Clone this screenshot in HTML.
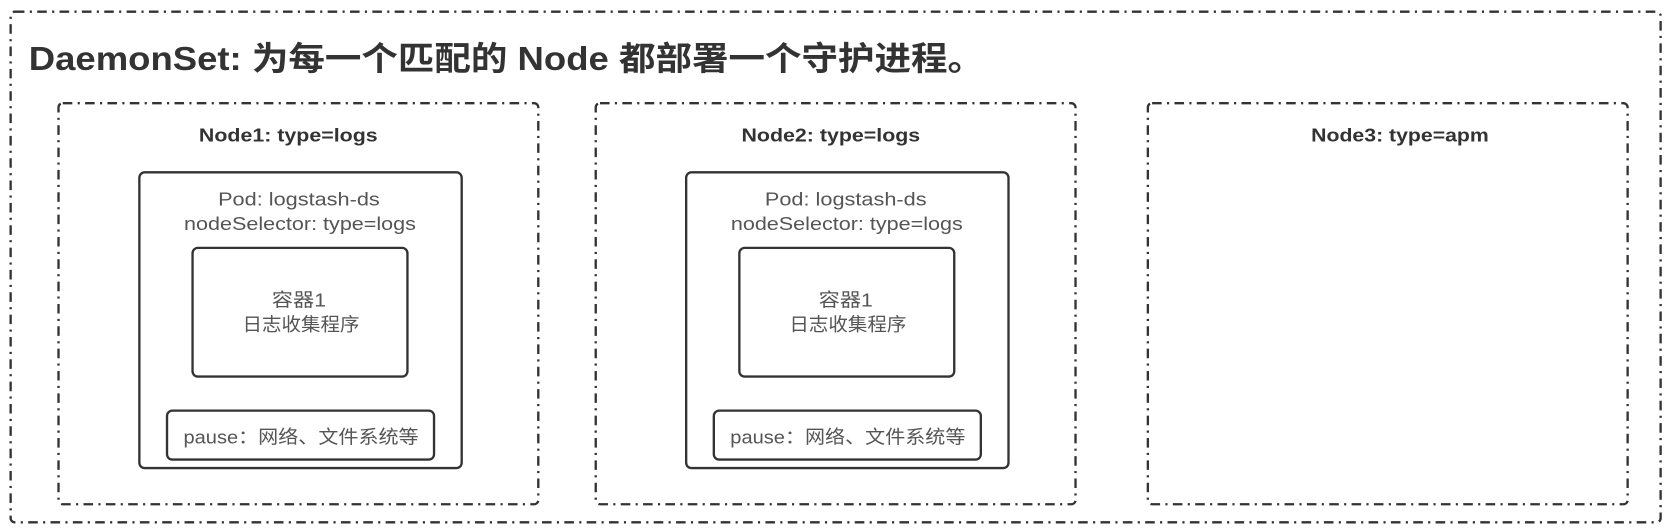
<!DOCTYPE html>
<html><head><meta charset="utf-8"><style>
html,body{margin:0;padding:0;background:#fff;}
svg{display:block}
text{font-family:"Liberation Sans","Noto Sans CJK SC",sans-serif;}
</style></head><body>
<svg width="1667" height="530" viewBox="0 0 1567 498.2" preserveAspectRatio="none" xmlns="http://www.w3.org/2000/svg">
<g fill="none" stroke="#333" stroke-width="2.2" stroke-dasharray="9 5 2 5">
<rect x="10" y="11" width="1551" height="480" rx="4"/>
<rect x="55" y="97" width="451" height="377" rx="4"/>
<rect x="560" y="97" width="451" height="377" rx="4"/>
<rect x="1079" y="97" width="451" height="377" rx="4"/>
</g>
<g fill="none" stroke="#333" stroke-width="2.2">
<rect x="131" y="162" width="303" height="278" rx="5"/>
<rect x="181" y="233" width="202" height="121" rx="5"/>
<rect x="157" y="386" width="251" height="46" rx="5"/>
<rect x="645" y="162" width="303" height="278" rx="5"/>
<rect x="695" y="233" width="202" height="121" rx="5"/>
<rect x="671" y="386" width="251" height="46" rx="5"/>
</g>
<text x="27" y="66" font-size="31" font-weight="bold" fill="#333" textLength="898" lengthAdjust="spacingAndGlyphs">DaemonSet: 为每一个匹配的 Node 都部署一个守护进程。</text>
<g font-size="17" font-weight="bold" fill="#333" text-anchor="middle">
<text x="271" y="133" textLength="168" lengthAdjust="spacingAndGlyphs">Node1: type=logs</text>
<text x="781" y="133" textLength="168" lengthAdjust="spacingAndGlyphs">Node2: type=logs</text>
<text x="1316" y="133" textLength="167" lengthAdjust="spacingAndGlyphs">Node3: type=apm</text>
</g>
<g font-size="17.5" fill="#555" text-anchor="middle">
<text x="281" y="193" textLength="152" lengthAdjust="spacingAndGlyphs">Pod: logstash-ds</text>
<text x="282" y="216" textLength="218" lengthAdjust="spacingAndGlyphs">nodeSelector: type=logs</text>
<text x="281" y="288" textLength="51" lengthAdjust="spacingAndGlyphs">容器1</text>
<text x="283" y="311" textLength="110" lengthAdjust="spacingAndGlyphs">日志收集程序</text>
<text x="283" y="417" textLength="221" lengthAdjust="spacingAndGlyphs">pause：网络、文件系统等</text>
<text x="795" y="193" textLength="152" lengthAdjust="spacingAndGlyphs">Pod: logstash-ds</text>
<text x="796" y="216" textLength="218" lengthAdjust="spacingAndGlyphs">nodeSelector: type=logs</text>
<text x="795" y="288" textLength="51" lengthAdjust="spacingAndGlyphs">容器1</text>
<text x="797" y="311" textLength="110" lengthAdjust="spacingAndGlyphs">日志收集程序</text>
<text x="797" y="417" textLength="221" lengthAdjust="spacingAndGlyphs">pause：网络、文件系统等</text>
</g>
</svg>
</body></html>
